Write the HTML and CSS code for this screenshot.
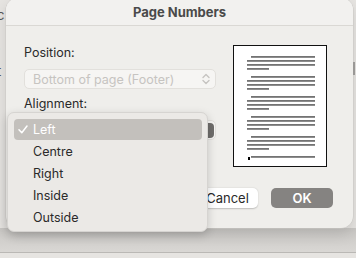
FILE: index.html
```html
<!DOCTYPE html>
<html>
	<head>
		<meta charset="utf-8" />
		<title>Page Numbers</title>
		<link rel="stylesheet" href="styles.css">
	</head>
	<body>
		<div id="desk">
			<div class="top">
				<div class="doc-left">
					<span class="frag f1">c</span>
					<span class="frag f2">,</span>
					<span class="frag f3">t</span>
				</div>
				<div class="dialog">
					<div class="titlebar">Page Numbers</div>
					<div class="content">
						<div class="form">
							<div class="label">Position:</div>
							<div class="select disabled">
								<span>Bottom of page (Footer)</span>
								<svg class="chev" width="8" height="12" viewBox="0 0 8 12"><polyline points="1,4.5 4,1.5 7,4.5" /><polyline points="1,7.5 4,10.5 7,7.5" /></svg>
							</div>
							<div class="label second">Alignment:</div>
							<div class="select">
								<span>Left</span>
								<div class="stepper"></div>
							</div>
						</div>
						<div class="preview">
							<div class="para"><i class="ind"></i><i></i><i></i><i class="short"></i></div>
							<div class="para"><i class="ind"></i><i></i><i></i><i class="short"></i></div>
							<div class="para"><i class="ind"></i><i></i><i></i><i class="short"></i></div>
							<div class="para"><i class="ind"></i><i></i><i></i><i class="short"></i></div>
							<div class="para"><i class="ind"></i><i></i><i></i><i class="short"></i></div>
							<div class="para last"><i class="ind"></i></div>
							<b class="num"></b>
						</div>
						<div class="buttons">
							<div class="btn cancel">Cancel</div>
							<div class="btn ok">OK</div>
						</div>
					</div>
				</div>
				<div class="doc-right"><b></b></div>
			</div>
			<div class="floor"></div>

			<div class="menu">
				<div class="item on">
					<svg class="check" width="10" height="9" viewBox="0 0 10 9"><polyline points="1,4.8 3.8,7.8 9,1" /></svg>
					Left
				</div>
				<div class="item">Centre</div>
				<div class="item">Right</div>
				<div class="item">Inside</div>
				<div class="item">Outside</div>
			</div>
		</div>
	</body>
</html>
```

FILE: styles.css
```css
html,body{
	margin: 0;
	padding: 0;
}
body{
	font-family: Inter, "Liberation Sans", sans-serif;
	color: #2a2a2a;
}
#desk{
	width: 356px;
	height: 258px;
	overflow: hidden;
	position: relative;
	background: #e6e4e1;
}
.top{
	display: flex;
	height: 228px;
}
.doc-left{
	width: 6px;
	flex: none;
	overflow: hidden;
	position: relative;
	border-right: 0;
	font-size: 13px;
	color: #555;
}
.frag{
	display: block;
	margin-left: -3px;
	line-height: 14px;
}
.f1{margin-top: 8px;}
.f2{margin-top: 16px;}
.f3{margin-top: 12px;}
.doc-right{
	width: 3px;
	flex: none;
	padding-top: 62px;
}
.doc-right b{
	display: block;
	width: 2px;
	height: 13px;
	background: #9a9896;
}
.dialog{
	width: 347px;
	flex: none;
	margin-top: -2px;
	height: 230px;
	background: #efeeeb;
	border-radius: 12px;
	box-shadow: 0 0 0 0.5px #c9c7c4, 0 6px 14px rgba(0,0,0,0.12);
	display: flex;
	flex-direction: column;
}
.titlebar{
	height: 27px;
	line-height: 29px;
	text-align: center;
	font-size: 13px;
	font-weight: 700;
	color: #4a4a4a;
	background: #f2f1ef;
	border-radius: 12px 12px 0 0;
	border-bottom: 1px solid #dad8d4;
}
.content{
	display: grid;
	grid-template-columns: 192px 94px;
	column-gap: 17px;
	padding: 19px 20px 0 18px;
}
.label{
	font-size: 12.5px;
	line-height: 16px;
	height: 16px;
}
.label.second{
	margin-top: 7px;
}
.select{
	margin-top: 8px;
	height: 18px;
	border: 1px solid #e2e0dc;
	border-radius: 5px;
	background: #f6f5f3;
	display: flex;
	align-items: center;
	justify-content: space-between;
	padding: 0 4px 0 8px;
	font-size: 12.5px;
}
.select.disabled{
	color: #c6c4c1;
}
.select + .label{
	margin-top: 7px;
}
.chev{
	fill: none;
	stroke: #c6c4c1;
	stroke-width: 1.4;
	stroke-linecap: round;
	stroke-linejoin: round;
	margin-right: 1px;
}
.stepper{
	width: 15px;
	height: 15px;
	border-radius: 4px;
	background: #6f6d6b;
	margin-right: -3px;
}
.preview{
	height: 120px;
	border: 1px solid #111;
	background: #fff;
	padding: 10px 0 0 13px;
	box-sizing: border-box;
	height: 122px;
	position: relative;
}
.para{
	display: flex;
	flex-direction: column;
	align-items: flex-start;
	gap: 2px;
	margin-bottom: 6px;
}
.para i{
	display: block;
	width: 68px;
	height: 2px;
	background: linear-gradient(#666, #9a9a9a);
}
.para i.ind{
	width: 64px;
	margin-left: 4px;
}
.para i.short{
	width: 22px;
}
.num{
	position: absolute;
	left: 14px;
	top: 111px;
	width: 2px;
	height: 3px;
	background: #000;
}
.buttons{
	grid-column: 1 / 3;
	display: flex;
	justify-content: flex-end;
	gap: 13px;
	margin-top: 21px;
	margin-right: -6px;
}
.btn{
	width: 61px;
	height: 20px;
	line-height: 20px;
	text-align: center;
	border-radius: 5px;
	font-size: 13px;
}
.cancel{
	background: #fff;
	box-shadow: 0 0.5px 1.5px rgba(0,0,0,0.2);
}
.ok{
	width: 62px;
	background: #858381;
	color: #fff;
	font-weight: 600;
}
.floor{
	height: 24px;
	background: linear-gradient(#c9c7c4, #d9d7d4);
	border-bottom: 1px solid #bab8b5;
}
.menu{
	position: absolute;
	left: 7px;
	top: 112px;
	width: 201px;
	height: 120px;
	box-sizing: border-box;
	padding: 6px 5px 0 6px;
	background: #ebe9e6;
	border: 1px solid #d6d4d1;
	border-radius: 7px;
	box-shadow: 0 3px 10px rgba(0,0,0,0.18);
	font-size: 12.5px;
}
.item{
	height: 22px;
	line-height: 22px;
	padding-left: 19px;
	border-radius: 4px;
	position: relative;
}
.item.on{
	height: 21px;
	line-height: 21px;
	margin-bottom: 1px;
	background: #c3c0bc;
	color: #fff;
}
.check{
	position: absolute;
	left: 4px;
	top: 6px;
	fill: none;
	stroke: #fff;
	stroke-width: 1.5;
	stroke-linecap: round;
	stroke-linejoin: round;
}
```
